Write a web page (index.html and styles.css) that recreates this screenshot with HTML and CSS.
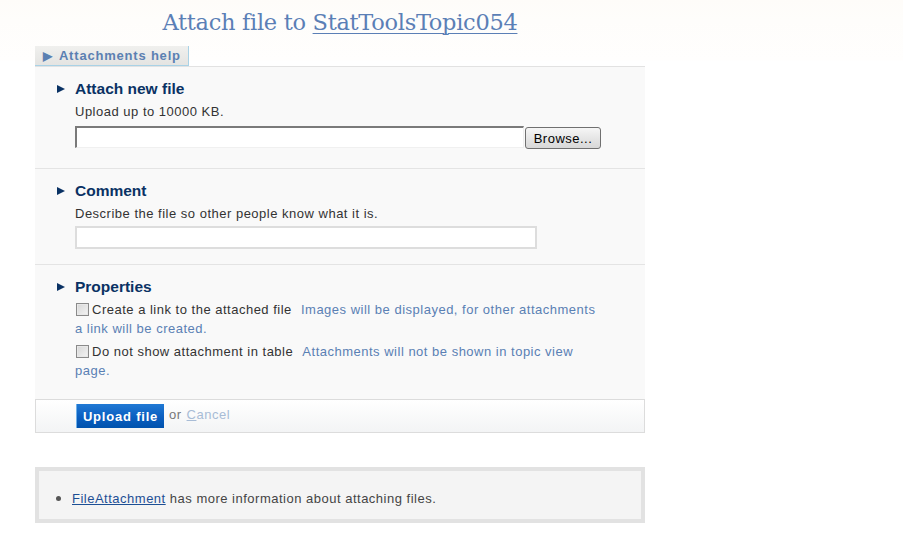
FILE: index.html
```html
<!DOCTYPE html>
<html>
<head>
<meta charset="utf-8">
<title>Attach file</title>
<link rel="stylesheet" href="styles.css">
</head>
<body>
<div class="page">
  <h1 class="title">Attach file to <a href="#">StatToolsTopic054</a></h1>
  <div class="helptab"><span class="tri">&#9654;</span> Attachments help</div>
  <div class="form">
    <div class="section sec1">
      <h2 class="heading"><span class="arrow"></span>Attach new file</h2>
      <p class="desc">Upload up to 10000 KB.</p>
      <div class="filerow">
        <input class="filefield" type="text">
        <button class="browse" type="button">Browse...</button>
      </div>
    </div>
    <div class="section sec2">
      <h2 class="heading"><span class="arrow"></span>Comment</h2>
      <p class="desc">Describe the file so other people know what it is.</p>
      <input class="comment" type="text">
    </div>
    <div class="section sec3">
      <h2 class="heading"><span class="arrow"></span>Properties</h2>
      <p class="prop"><span class="cb"></span>Create a link to the attached file <span class="hint">Images will be displayed, for other attachments a link will be created.</span></p>
      <p class="prop"><span class="cb"></span>Do not show attachment in table <span class="hint">Attachments will not be shown in topic view page.</span></p>
    </div>
    <div class="footer">
      <button class="upload" type="button">Upload file</button>
      <span class="or">or</span>
      <a class="cancel" href="#"><u>C</u>ancel</a>
    </div>
  </div>
  <div class="info">
    <ul>
      <li><a href="#">FileAttachment</a> has more information about attaching files.</li>
    </ul>
  </div>
</div>
</body>
</html>
```

FILE: styles.css
```css
html, body {
  margin: 0;
  padding: 0;
}
body {
  background: #ffffff linear-gradient(to bottom, #fefcf9 0px, #fefdfb 20px, #fffefd 60px, #ffffff 61px) no-repeat;
  font-family: "Liberation Sans", Arial, sans-serif;
  font-size: 13px;
  letter-spacing: 0.5px;
  color: #333333;
}
.page {
  width: 610px;
  margin-left: 35px;
  padding-top: 8px;
}
.title {
  margin: 0;
  height: 38px;
  text-align: center;
  font-family: "DejaVu Serif", "Liberation Serif", serif;
  font-weight: normal;
  font-size: 22.5px;
  line-height: 28px;
  color: #5b7fb6;
  letter-spacing: -0.3px;
}
.title a {
  color: #5b7fb6;
  text-decoration: underline;
  text-underline-offset: 3px;
  text-decoration-thickness: 1px;
}
.helptab {
  display: inline-block;
  height: 20px;
  box-sizing: border-box;
  padding: 2px 8px 0 8px;
  width: 154px;
  background: linear-gradient(to bottom, #f0f0ee, #e4e4e2);
  border-right: 1px solid #a9d2e6;
  border-bottom: 1px solid #a9d2e6;
  font-weight: bold;
  font-size: 13px;
  letter-spacing: 0.8px;
  line-height: 16px;
  color: #5b80b2;
  vertical-align: top;
  white-space: nowrap;
}
.helptab .tri {
  font-size: 12px;
  letter-spacing: 0;
  margin-right: 3px;
}
.form {
  border-top: 1px solid #e2e2e2;
  background: #f9f9f9;
}
.section {
  padding: 12px 22px 0 22px;
  border-bottom: 1px solid #e4e4e4;
}
.sec1 { padding-bottom: 19px; }
.sec2 { padding-bottom: 15px; }
.sec3 { padding-bottom: 19px; border-bottom: none; }
.heading {
  margin: 0;
  font-size: 15.5px;
  letter-spacing: 0;
  line-height: 20px;
  font-weight: bold;
  color: #0a3264;
  display: flex;
  align-items: center;
}
.arrow {
  width: 0;
  height: 0;
  border-top: 4px solid transparent;
  border-bottom: 4px solid transparent;
  border-left: 8px solid #0a3264;
  margin-right: 10px;
}
.desc {
  margin: 5px 0 0 18px;
  line-height: 16px;
}
.filerow {
  display: flex;
  align-items: flex-start;
  margin: 6px 0 0 18px;
}
.filefield {
  box-sizing: border-box;
  width: 449px;
  height: 22px;
  margin: 0;
  padding: 0;
  border-top: 2px solid #7a7a7a;
  border-left: 2px solid #7a7a7a;
  border-right: 1px solid #f0f0f0;
  border-bottom: 1px solid #f0f0f0;
  background: #ffffff;
}
.browse {
  box-sizing: border-box;
  width: 76px;
  height: 22px;
  margin: 1px 0 0 1px;
  padding: 0;
  border: 1px solid #707070;
  border-radius: 3px;
  background: linear-gradient(to bottom, #f6f6f6, #e6e6e6 50%, #d8d8d8);
  font-family: "Liberation Sans", Arial, sans-serif;
  font-size: 13px;
  letter-spacing: 0.5px;
  color: #000000;
}
.comment {
  display: block;
  box-sizing: border-box;
  width: 462px;
  height: 23px;
  margin: 4px 0 0 18px;
  padding: 0;
  border: 2px solid #dddddd;
  background: #ffffff;
}
.prop {
  margin: 4px 0 0 18px;
  width: 525px;
  line-height: 19px;
}
.sec3 .heading + .prop { margin-top: 3px; }
.cb {
  display: inline-block;
  box-sizing: border-box;
  width: 13px;
  height: 13px;
  border: 1px solid #8a8a8a;
  background: linear-gradient(135deg, #d6d6d6, #f4f4f4);
  box-shadow: inset 0 0 0 1px #e8e8e8;
  vertical-align: -2px;
  margin: 0 3px 0 1px;
}
.hint {
  color: #5a80b4;
  margin-left: 5px;
}
.footer {
  height: 34px;
  box-sizing: border-box;
  border: 1px solid #dcdcdc;
  background: linear-gradient(to bottom, #ffffff, #f3f4f5);
  padding: 4px 0 0 40px;
  display: flex;
  align-items: flex-start;
}
.upload {
  box-sizing: border-box;
  width: 88px;
  height: 24px;
  margin: 0;
  padding: 0;
  border: none;
  border-left: 1px solid #6fb0e8;
  background: linear-gradient(to bottom, #2079d4, #0a5ec0 55%, #0052ad);
  color: #ffffff;
  font-family: "Liberation Sans", Arial, sans-serif;
  font-weight: bold;
  font-size: 13px;
  letter-spacing: 0.8px;
}
.or {
  margin-left: 5px;
  line-height: 22px;
  color: #777777;
}
.cancel {
  margin-left: 5px;
  line-height: 22px;
  color: #a8bcd6;
  text-decoration: none;
}
.cancel u { text-decoration: underline; }
.info {
  margin-top: 34px;
  border: 4px solid #e2e2e2;
  background: #f4f4f4;
  height: 48px;
}
.info ul {
  margin: 0;
  padding: 0 0 0 33px;
  list-style: disc;
  line-height: 16px;
}
.info li {
  padding-top: 19px;
  color: #444444;
}
.info li::marker {
  color: #555555;
  font-size: 16px;
}
.info a {
  color: #1d4f94;
}
```
